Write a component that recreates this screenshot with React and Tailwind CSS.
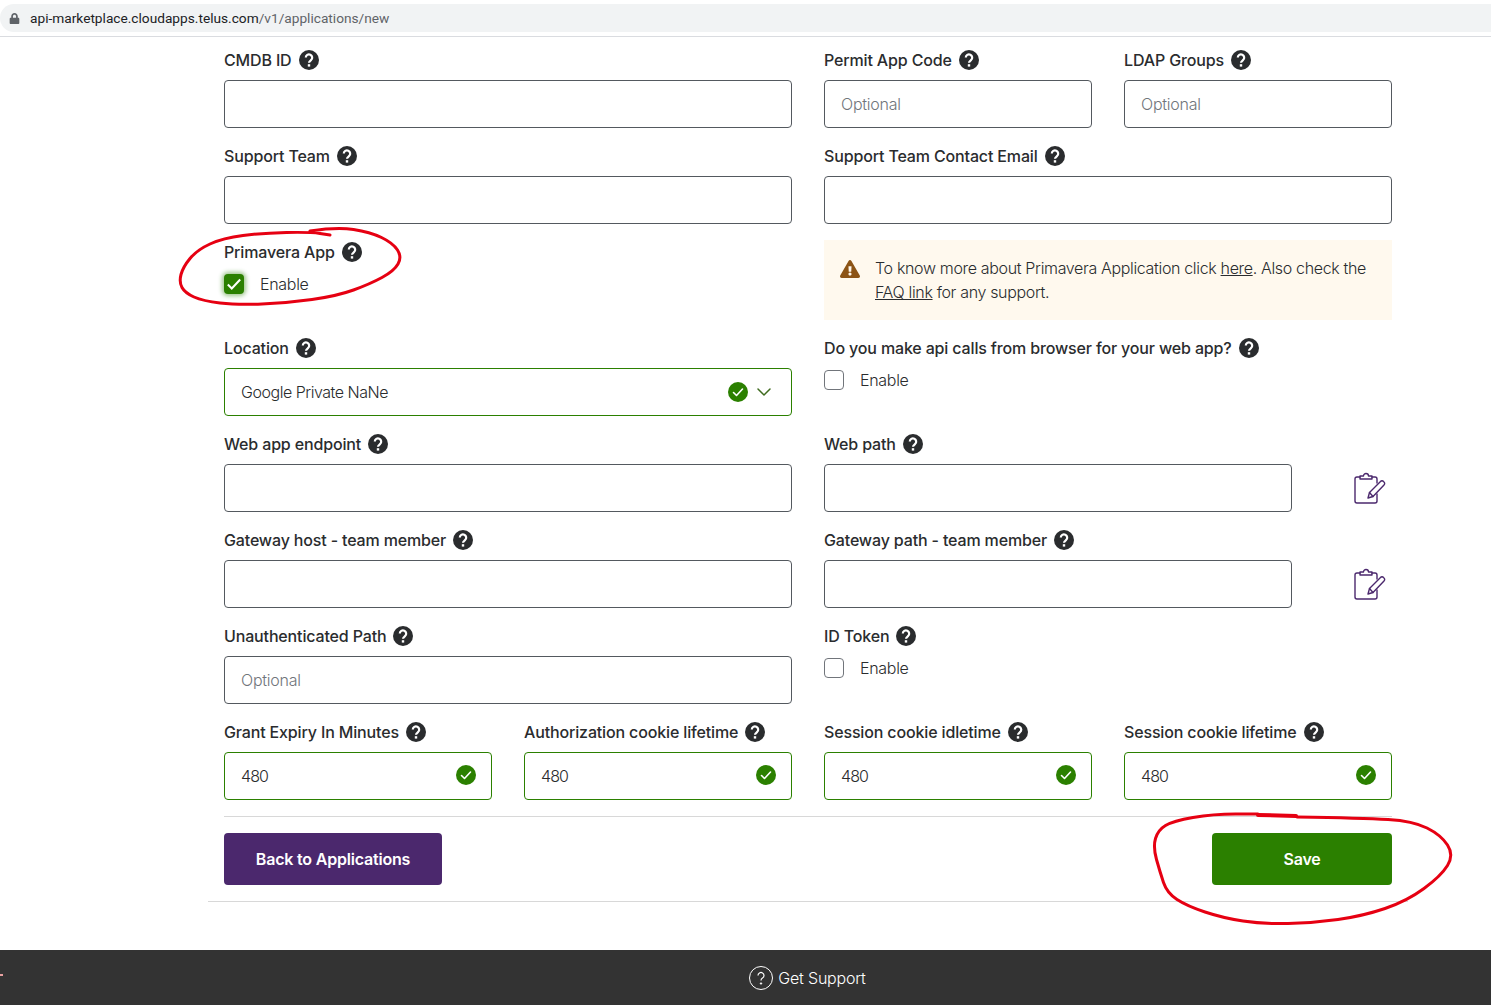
import React from "react";
import { FaExclamationTriangle, FaLock } from "react-icons/fa";
import { ChevronDown } from "lucide-react";

const HelpIcon = () => (
    <svg width="20" height="20" viewBox="0 0 20 20" className="shrink-0">
        <circle cx="10" cy="10" r="10" fill="#2a2c2e" />
        <path d="M6.800 7.600a3.200 3.200 0 1 1 5.300 2.400c-1.200.9-2.100 1.400-2.100 2.800" fill="none" stroke="#fff" strokeWidth="2.200" />
        <rect x="8.800" y="14.200" width="2.400" height="2.400" fill="#fff" />
    </svg>
);

const CheckBadge = () => (
    <svg width="20" height="20" viewBox="0 0 20 20" className="shrink-0">
        <circle cx="10" cy="10" r="10" fill="#2b8000" />
        <path d="M5.500 10.500l3 3 6-6.500" fill="none" stroke="#fff" strokeWidth="1.600" strokeLinecap="round" strokeLinejoin="round" />
    </svg>
);

const ClipboardEdit = () => (
    <svg width="34" height="34" viewBox="0 0 34 34" fill="none" stroke="#4b286d" strokeWidth="1.400" strokeLinecap="round" strokeLinejoin="round">
        <path d="M8 5H5a2 2 0 0 0-2 2v22a2 2 0 0 0 2 2h18a2 2 0 0 0 2-2v-7" />
        <path d="M20 5h3a2 2 0 0 1 2 2v4" />
        <path d="M8 7V4h3.500a2.500 2.500 0 0 1 5 0H20v3z" />
        <path d="M16 26l1.500-5.500L28.500 9.500a2 2 0 0 1 3 0l.5.500a2 2 0 0 1 0 3L21 24.500z" />
        <path d="M17.500 20.500L21 24.500" />
    </svg>
);

const Label = ({ children }) => (
    <div className="flex items-center gap-[7px] h-6 text-[16px] font-medium text-[#2a2c2e] tracking-[-0.15px] whitespace-nowrap">
        <span>{children}</span>
        <HelpIcon />
    </div>
);

const Input = ({ placeholder, value, valid, className = "" }) => (
    <div
        className={`h-12 mt-2 flex items-center justify-between px-4 rounded-[4px] border bg-white text-[16px] font-light ${
            valid ? "border-[#2b8000]" : "border-[#54595f]"
        } ${className}`}
    >
        <span className={value ? "text-[#2a2c2e] tracking-[-0.9px]" : "text-[#71757b] tracking-[-0.25px]"}>{value || placeholder}</span>
        {valid && <span className="-mr-px -mt-[2px]"><CheckBadge /></span>}
    </div>
);

const Checkbox = ({ checked }) => (
    <div className="flex items-center h-6 mt-2">
        {checked ? (
            <span className="w-5 h-5 rounded-[4px] bg-[#2b8000] flex items-center justify-center shadow-[0_0_4px_2px_rgba(43,128,0,0.45)]">
                <svg width="18" height="18" viewBox="0 0 16 16">
                    <path d="M2.500 8.500l3.500 3.500 7.500-8" fill="none" stroke="#fff" strokeWidth="1.800" />
                </svg>
            </span>
        ) : (
            <span className="w-5 h-5 rounded-[4px] border border-[#71757b] bg-white" />
        )}
        <span className="ml-4 text-[16px] font-light text-[#2a2c2e] tracking-[-0.3px]">Enable</span>
    </div>
);

const Field = ({ label, span = "", children }) => (
    <div className={span}>
        <Label>{label}</Label>
        {children}
    </div>
);

// hand drawn red rings, points run along the stroke
const smooth = (pts) => {
    let d = `M${pts[0][0]} ${pts[0][1]}`;
    for (let i = 1; i < pts.length - 1; i++) {
        const mx = (pts[i][0] + pts[i + 1][0]) / 2;
        const my = (pts[i][1] + pts[i + 1][1]) / 2;
        d += ` Q${pts[i][0]} ${pts[i][1]} ${mx} ${my}`;
    }
    const last = pts[pts.length - 1];
    return `${d} L${last[0]} ${last[1]}`;
};

const ringOne = [[310, 231], [337, 227], [370, 232], [393, 243], [402, 257], [394, 271], [370, 284], [337, 296], [287, 303], [237, 305], [203, 301], [185, 293], [179, 282], [183, 267], [197, 250], [223, 238], [263, 233], [310, 232], [330, 235]];
const ringTwo = [[1297, 817], [1363, 818], [1413, 821], [1441, 835], [1454, 855], [1441, 876], [1407, 901], [1363, 916], [1313, 923], [1263, 924], [1223, 918], [1187, 906], [1167, 893], [1160, 872], [1153, 847], [1158, 830], [1173, 821], [1213, 814], [1258, 814]];

const App = () => {
    return (
        <div className="relative h-[1005px] overflow-hidden bg-white flex flex-col font-['Inter',sans-serif]">
            <div className="h-[37px] shrink-0 border-b border-[#dadce0] pt-1">
                <div className="h-7 bg-[#f1f3f4] rounded-l-[14px] flex items-center pl-[9px] font-['Roboto',sans-serif] text-[13.700px]">
                    <FaLock className="text-[11px] text-[#5f6368]" />
                    <span className="ml-[10px] text-[#202124]">api-marketplace.cloudapps.telus.com</span>
                    <span className="text-[#5f6368]">/v1/applications/new</span>
                </div>
            </div>

            <div className="w-[1200px] ml-[208px] pt-[11px]">
                <div className="px-4">
                    <div className="grid grid-cols-4 gap-x-8 gap-y-4">
                        <Field label="CMDB ID" span="col-span-2"><Input /></Field>
                        <Field label="Permit App Code"><Input placeholder="Optional" /></Field>
                        <Field label="LDAP Groups"><Input placeholder="Optional" /></Field>

                        <Field label="Support Team" span="col-span-2"><Input /></Field>
                        <Field label="Support Team Contact Email" span="col-span-2"><Input /></Field>

                        <Field label="Primavera App" span="col-span-2"><Checkbox checked /></Field>
                        <div className="col-span-2 h-20 bg-[#fff9ee] flex pl-4 pr-4 pt-4 text-[16px] leading-6 font-light text-[#2a2c2e] tracking-[-0.34px]">
                            <FaExclamationTriangle className="text-[20px] text-[#8c5415] mt-[3px] shrink-0" />
                            <p className="ml-[15px]">
                                To know more about Primavera Application click <u>here</u>. Also check the <u>FAQ link</u> for any support.
                            </p>
                        </div>

                        <Field label="Location" span="col-span-2">
                            <div className="h-12 mt-2 flex items-center px-4 rounded-[4px] border border-[#2b8000] text-[16px] font-light text-[#2a2c2e] tracking-[-0.47px]">
                                <span className="flex-1">Google Private NaNe</span>
                                <CheckBadge />
                                <ChevronDown size={24} strokeWidth={1.500} className="ml-[4px] -mr-[1px] text-[#3f6b1f]" />
                            </div>
                        </Field>
                        <Field label="Do you make api calls from browser for your web app?" span="col-span-2"><Checkbox /></Field>

                        <Field label="Web app endpoint" span="col-span-2"><Input /></Field>
                        <Field label="Web path" span="col-span-2">
                            <div className="flex items-center">
                                <Input className="w-[468px]" />
                                <span className="ml-[60px] mt-[10px]"><ClipboardEdit /></span>
                            </div>
                        </Field>

                        <Field label="Gateway host - team member" span="col-span-2"><Input /></Field>
                        <Field label="Gateway path - team member" span="col-span-2">
                            <div className="flex items-center">
                                <Input className="w-[468px]" />
                                <span className="ml-[60px] mt-[10px]"><ClipboardEdit /></span>
                            </div>
                        </Field>

                        <Field label="Unauthenticated Path" span="col-span-2"><Input placeholder="Optional" /></Field>
                        <Field label="ID Token" span="col-span-2"><Checkbox /></Field>

                        <Field label="Grant Expiry In Minutes"><Input value="480" valid /></Field>
                        <Field label="Authorization cookie lifetime"><Input value="480" valid /></Field>
                        <Field label="Session cookie idletime"><Input value="480" valid /></Field>
                        <Field label="Session cookie lifetime"><Input value="480" valid /></Field>
                    </div>

                    <div className="mt-4 border-t border-[#d8d8d8] pt-4 pb-4 flex justify-between">
                        <button className="h-[52px] w-[218px] rounded-[4px] bg-[#4b286d] text-white text-[16px] font-semibold tracking-[-0.2px]">
                            Back to Applications
                        </button>
                        <button className="h-[52px] w-[180px] rounded-[4px] bg-[#2b8000] text-white text-[16px] font-semibold tracking-[-0.2px]">
                            Save
                        </button>
                    </div>
                </div>
                <div className="border-t border-[#d8d8d8]" />
            </div>

            <div className="mt-auto relative h-[55px] bg-[#333333] flex items-center justify-center pl-[124px] text-white text-[16px] font-light tracking-[-0.2px]">
                <span className="absolute left-0 top-[24px] w-[3px] h-[2px] bg-[#e8a0a0]" />
                <svg width="24" height="24" viewBox="0 0 24 24" fill="none" stroke="#fff" strokeWidth="1">
                    <circle cx="12" cy="12" r="11.500" />
                    <path d="M9 9.500a3 3 0 1 1 4.500 2.600c-1 .6-1.500 1.200-1.500 2.400" strokeWidth="1.200" />
                    <circle cx="12" cy="17.500" r=".7" fill="#fff" />
                </svg>
                <span className="ml-[5px]">Get Support</span>
            </div>

            {/* annotations drawn on top of the screenshot */}
            <svg className="absolute inset-0 pointer-events-none" width="1491" height="1005" fill="none" stroke="#e60012" strokeWidth="3" strokeLinecap="round">
                <path d={smooth(ringOne)} />
                <path d={smooth(ringTwo)} />
                <path d="M1258 815L1296 816" strokeWidth="4" />
            </svg>
        </div>
    );
};

export default App;
